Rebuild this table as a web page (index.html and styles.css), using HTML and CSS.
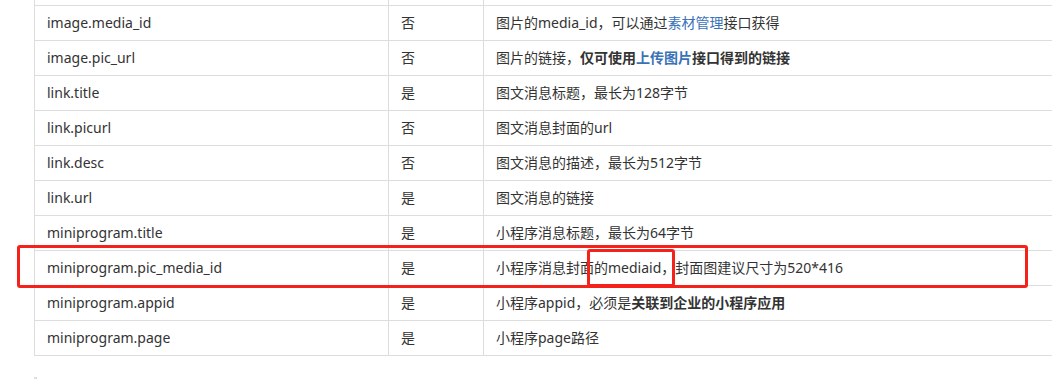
FILE: index.html
```html
<!DOCTYPE html>
<html lang="zh-CN">
<head>
<meta charset="utf-8">
<title>参数说明</title>
<link rel="stylesheet" href="styles.css">
</head>
<body>
<div class="page">
  <div class="table-wrap">
    <table class="params">
      <colgroup>
        <col class="c-name">
        <col class="c-req">
        <col class="c-desc">
      </colgroup>
      <tbody>
        <tr class="hidden-row"><td></td><td></td><td></td></tr>
        <tr><td>image.media_id</td><td>否</td><td>图片的media_id，可以通过<a class="lnk">素材管理</a>接口获得</td></tr>
        <tr><td>image.pic_url</td><td>否</td><td>图片的链接，<b>仅可使用<a class="lnk">上传图片</a>接口得到的链接</b></td></tr>
        <tr><td>link.title</td><td>是</td><td>图文消息标题，最长为128字节</td></tr>
        <tr><td>link.picurl</td><td>否</td><td>图文消息封面的url</td></tr>
        <tr><td>link.desc</td><td>否</td><td>图文消息的描述，最长为512字节</td></tr>
        <tr><td>link.url</td><td>是</td><td>图文消息的链接</td></tr>
        <tr><td>miniprogram.title</td><td>是</td><td>小程序消息标题，最长为64字节</td></tr>
        <tr><td>miniprogram.pic_media_id</td><td>是</td><td>小程序消息封面的mediaid，封面图建议尺寸为520*416</td></tr>
        <tr><td>miniprogram.appid</td><td>是</td><td>小程序appid，必须是<b>关联到企业的小程序应用</b></td></tr>
        <tr><td>miniprogram.page</td><td>是</td><td>小程序page路径</td></tr>
      </tbody>
    </table>
  </div>
  <div class="next-mark"></div>
  <div class="mark mark-row"></div>
  <div class="mark mark-word"></div>
</div>
</body>
</html>
```

FILE: styles.css
```css
html, body {
  margin: 0;
  padding: 0;
  background: #fff;
  overflow: hidden;
}

.page {
  position: relative;
  width: 1052px;
  height: 379px;
  overflow: hidden;
  font-family: "Noto Sans", "Noto Sans CJK SC", sans-serif;
  font-size: 14px;
  color: #333;
}

.table-wrap {
  padding-left: 34px;
  margin-top: -30px;
}

.params {
  border-collapse: collapse;
  table-layout: fixed;
  width: 1060px;
}

.c-name { width: 354px; }
.c-req { width: 95px; }

.params td {
  border: 1px solid #ddd;
  height: 35px;
  padding: 0 12px;
  box-sizing: border-box;
  vertical-align: middle;
  white-space: nowrap;
  line-height: 20px;
}

.params b {
  font-weight: bold;
  color: #333;
}

.lnk {
  color: #3a72b8;
  text-decoration: none;
}

.next-mark {
  margin: 21px 0 0 34px;
  width: 3px;
  height: 3px;
  background: #ddd;
}

.mark {
  position: absolute;
  border: 3px solid #f5221b;
  border-radius: 3px;
  box-sizing: border-box;
}

.mark-row {
  left: 17px;
  top: 245px;
  width: 1011px;
  height: 43px;
}

.mark-word {
  left: 587px;
  top: 249px;
  width: 88px;
  height: 38px;
}
```
